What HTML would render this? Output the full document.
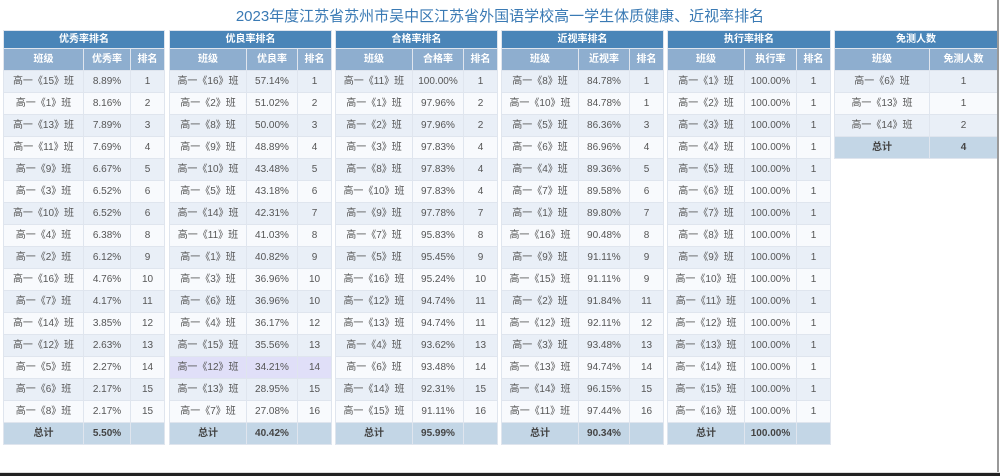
<!DOCTYPE html>
<html><head><meta charset="utf-8"><style>
body{margin:0;width:1000px;height:476px;background:#fff;position:relative;overflow:hidden;font-family:"Liberation Sans","Noto Sans CJK SC",sans-serif;}
h1{position:absolute;top:6px;left:0;width:1000px;margin:0;text-align:center;font-weight:normal;font-size:15px;color:#3a7ab4;line-height:22px;}
table{position:absolute;top:30px;border-collapse:collapse;table-layout:fixed;font-size:10px;color:#555;}
td,th{border:1px solid #dfe5ee;text-align:center;padding:0;overflow:hidden;white-space:nowrap;line-height:20px;}
th.h{background:#4a85b8;color:#fff;height:17px;line-height:17px;font-weight:bold;}
th.s{background:#8eaecf;color:#fff;height:21px;font-weight:bold;}
td{height:21px;}
tr.o td{background:#e9eff7}
tr.e td{background:#f8fafd}
tr.hl td{background:#e0dff8}
tr.t td{background:#c3d6e6;font-weight:bold;height:21px;color:#444}
.rb{position:absolute;right:1px;top:0;width:2px;height:472px;background:#999}
.bb{position:absolute;left:0;bottom:0;width:1000px;height:3px;background:#222;border-top:1px solid #ddd}
</style></head><body>
<h1>2023年度江苏省苏州市吴中区江苏省外国语学校高一学生体质健康、近视率排名</h1>

<table style="left:3px;width:161px"><colgroup><col style="width:80px"><col style="width:47px"><col style="width:34px"></colgroup>
<tr><th class="h" colspan="3">优秀率排名</th></tr>
<tr><th class="s">班级</th><th class="s">优秀率</th><th class="s">排名</th></tr>
<tr class="o"><td>高一《15》班</td><td>8.89%</td><td>1</td></tr>
<tr class="e"><td>高一《1》班</td><td>8.16%</td><td>2</td></tr>
<tr class="o"><td>高一《13》班</td><td>7.89%</td><td>3</td></tr>
<tr class="e"><td>高一《11》班</td><td>7.69%</td><td>4</td></tr>
<tr class="o"><td>高一《9》班</td><td>6.67%</td><td>5</td></tr>
<tr class="e"><td>高一《3》班</td><td>6.52%</td><td>6</td></tr>
<tr class="o"><td>高一《10》班</td><td>6.52%</td><td>6</td></tr>
<tr class="e"><td>高一《4》班</td><td>6.38%</td><td>8</td></tr>
<tr class="o"><td>高一《2》班</td><td>6.12%</td><td>9</td></tr>
<tr class="e"><td>高一《16》班</td><td>4.76%</td><td>10</td></tr>
<tr class="o"><td>高一《7》班</td><td>4.17%</td><td>11</td></tr>
<tr class="e"><td>高一《14》班</td><td>3.85%</td><td>12</td></tr>
<tr class="o"><td>高一《12》班</td><td>2.63%</td><td>13</td></tr>
<tr class="e"><td>高一《5》班</td><td>2.27%</td><td>14</td></tr>
<tr class="o"><td>高一《6》班</td><td>2.17%</td><td>15</td></tr>
<tr class="e"><td>高一《8》班</td><td>2.17%</td><td>15</td></tr>
<tr class="t"><td>总计</td><td>5.50%</td><td></td></tr>
</table>

<table style="left:169px;width:162px"><colgroup><col style="width:77px"><col style="width:51px"><col style="width:34px"></colgroup>
<tr><th class="h" colspan="3">优良率排名</th></tr>
<tr><th class="s">班级</th><th class="s">优良率</th><th class="s">排名</th></tr>
<tr class="o"><td>高一《16》班</td><td>57.14%</td><td>1</td></tr>
<tr class="e"><td>高一《2》班</td><td>51.02%</td><td>2</td></tr>
<tr class="o"><td>高一《8》班</td><td>50.00%</td><td>3</td></tr>
<tr class="e"><td>高一《9》班</td><td>48.89%</td><td>4</td></tr>
<tr class="o"><td>高一《10》班</td><td>43.48%</td><td>5</td></tr>
<tr class="e"><td>高一《5》班</td><td>43.18%</td><td>6</td></tr>
<tr class="o"><td>高一《14》班</td><td>42.31%</td><td>7</td></tr>
<tr class="e"><td>高一《11》班</td><td>41.03%</td><td>8</td></tr>
<tr class="o"><td>高一《1》班</td><td>40.82%</td><td>9</td></tr>
<tr class="e"><td>高一《3》班</td><td>36.96%</td><td>10</td></tr>
<tr class="o"><td>高一《6》班</td><td>36.96%</td><td>10</td></tr>
<tr class="e"><td>高一《4》班</td><td>36.17%</td><td>12</td></tr>
<tr class="o"><td>高一《15》班</td><td>35.56%</td><td>13</td></tr>
<tr class="hl"><td>高一《12》班</td><td>34.21%</td><td>14</td></tr>
<tr class="o"><td>高一《13》班</td><td>28.95%</td><td>15</td></tr>
<tr class="e"><td>高一《7》班</td><td>27.08%</td><td>16</td></tr>
<tr class="t"><td>总计</td><td>40.42%</td><td></td></tr>
</table>

<table style="left:335px;width:162px"><colgroup><col style="width:77px"><col style="width:51px"><col style="width:34px"></colgroup>
<tr><th class="h" colspan="3">合格率排名</th></tr>
<tr><th class="s">班级</th><th class="s">合格率</th><th class="s">排名</th></tr>
<tr class="o"><td>高一《11》班</td><td>100.00%</td><td>1</td></tr>
<tr class="e"><td>高一《1》班</td><td>97.96%</td><td>2</td></tr>
<tr class="o"><td>高一《2》班</td><td>97.96%</td><td>2</td></tr>
<tr class="e"><td>高一《3》班</td><td>97.83%</td><td>4</td></tr>
<tr class="o"><td>高一《8》班</td><td>97.83%</td><td>4</td></tr>
<tr class="e"><td>高一《10》班</td><td>97.83%</td><td>4</td></tr>
<tr class="o"><td>高一《9》班</td><td>97.78%</td><td>7</td></tr>
<tr class="e"><td>高一《7》班</td><td>95.83%</td><td>8</td></tr>
<tr class="o"><td>高一《5》班</td><td>95.45%</td><td>9</td></tr>
<tr class="e"><td>高一《16》班</td><td>95.24%</td><td>10</td></tr>
<tr class="o"><td>高一《12》班</td><td>94.74%</td><td>11</td></tr>
<tr class="e"><td>高一《13》班</td><td>94.74%</td><td>11</td></tr>
<tr class="o"><td>高一《4》班</td><td>93.62%</td><td>13</td></tr>
<tr class="e"><td>高一《6》班</td><td>93.48%</td><td>14</td></tr>
<tr class="o"><td>高一《14》班</td><td>92.31%</td><td>15</td></tr>
<tr class="e"><td>高一《15》班</td><td>91.11%</td><td>16</td></tr>
<tr class="t"><td>总计</td><td>95.99%</td><td></td></tr>
</table>

<table style="left:501px;width:162px"><colgroup><col style="width:77px"><col style="width:51px"><col style="width:34px"></colgroup>
<tr><th class="h" colspan="3">近视率排名</th></tr>
<tr><th class="s">班级</th><th class="s">近视率</th><th class="s">排名</th></tr>
<tr class="o"><td>高一《8》班</td><td>84.78%</td><td>1</td></tr>
<tr class="e"><td>高一《10》班</td><td>84.78%</td><td>1</td></tr>
<tr class="o"><td>高一《5》班</td><td>86.36%</td><td>3</td></tr>
<tr class="e"><td>高一《6》班</td><td>86.96%</td><td>4</td></tr>
<tr class="o"><td>高一《4》班</td><td>89.36%</td><td>5</td></tr>
<tr class="e"><td>高一《7》班</td><td>89.58%</td><td>6</td></tr>
<tr class="o"><td>高一《1》班</td><td>89.80%</td><td>7</td></tr>
<tr class="e"><td>高一《16》班</td><td>90.48%</td><td>8</td></tr>
<tr class="o"><td>高一《9》班</td><td>91.11%</td><td>9</td></tr>
<tr class="e"><td>高一《15》班</td><td>91.11%</td><td>9</td></tr>
<tr class="o"><td>高一《2》班</td><td>91.84%</td><td>11</td></tr>
<tr class="e"><td>高一《12》班</td><td>92.11%</td><td>12</td></tr>
<tr class="o"><td>高一《3》班</td><td>93.48%</td><td>13</td></tr>
<tr class="e"><td>高一《13》班</td><td>94.74%</td><td>14</td></tr>
<tr class="o"><td>高一《14》班</td><td>96.15%</td><td>15</td></tr>
<tr class="e"><td>高一《11》班</td><td>97.44%</td><td>16</td></tr>
<tr class="t"><td>总计</td><td>90.34%</td><td></td></tr>
</table>

<table style="left:667px;width:163px"><colgroup><col style="width:77px"><col style="width:52px"><col style="width:34px"></colgroup>
<tr><th class="h" colspan="3">执行率排名</th></tr>
<tr><th class="s">班级</th><th class="s">执行率</th><th class="s">排名</th></tr>
<tr class="o"><td>高一《1》班</td><td>100.00%</td><td>1</td></tr>
<tr class="e"><td>高一《2》班</td><td>100.00%</td><td>1</td></tr>
<tr class="o"><td>高一《3》班</td><td>100.00%</td><td>1</td></tr>
<tr class="e"><td>高一《4》班</td><td>100.00%</td><td>1</td></tr>
<tr class="o"><td>高一《5》班</td><td>100.00%</td><td>1</td></tr>
<tr class="e"><td>高一《6》班</td><td>100.00%</td><td>1</td></tr>
<tr class="o"><td>高一《7》班</td><td>100.00%</td><td>1</td></tr>
<tr class="e"><td>高一《8》班</td><td>100.00%</td><td>1</td></tr>
<tr class="o"><td>高一《9》班</td><td>100.00%</td><td>1</td></tr>
<tr class="e"><td>高一《10》班</td><td>100.00%</td><td>1</td></tr>
<tr class="o"><td>高一《11》班</td><td>100.00%</td><td>1</td></tr>
<tr class="e"><td>高一《12》班</td><td>100.00%</td><td>1</td></tr>
<tr class="o"><td>高一《13》班</td><td>100.00%</td><td>1</td></tr>
<tr class="e"><td>高一《14》班</td><td>100.00%</td><td>1</td></tr>
<tr class="o"><td>高一《15》班</td><td>100.00%</td><td>1</td></tr>
<tr class="e"><td>高一《16》班</td><td>100.00%</td><td>1</td></tr>
<tr class="t"><td>总计</td><td>100.00%</td><td></td></tr>
</table>

<table style="left:834px;width:163px"><colgroup><col style="width:95px"><col style="width:68px"></colgroup>
<tr><th class="h" colspan="2">免测人数</th></tr>
<tr><th class="s">班级</th><th class="s">免测人数</th></tr>
<tr class="o"><td>高一《6》班</td><td>1</td></tr>
<tr class="e"><td>高一《13》班</td><td>1</td></tr>
<tr class="o"><td>高一《14》班</td><td>2</td></tr>
<tr class="t"><td>总计</td><td>4</td></tr>
</table>

<div class="rb"></div>
<div class="bb"></div>
</body></html>
